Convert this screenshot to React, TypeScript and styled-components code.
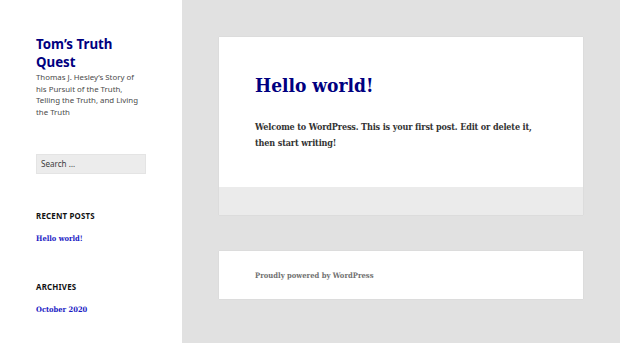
import React from "react";
import styled, { createGlobalStyle } from "styled-components";

const GlobalStyle = createGlobalStyle`
  html, body {
    margin: 0;
    padding: 0;
    background: #e1e1e1;
  }
`;

const serif = `"DejaVu Serif Condensed", "DejaVu Serif", "Liberation Serif", serif`;

const Page = styled.div`
  display: grid;
  grid-template-columns: 182px 1fr;
  min-height: 343px;
`;

const Sidebar = styled.aside`
  background: #ffffff;
  padding: 36px 0 0 36px;
  font-family: "Noto Sans", "Open Sans", sans-serif;
`;

const SiteTitle = styled.h1`
  margin: 0;
  width: 110px;
  font-size: 13.3px;
  line-height: 17.5px;
  font-weight: 700;
  color: #000080;
`;

const SiteDescription = styled.p`
  margin: 1px 0 0;
  width: 110px;
  font-size: 7.85px;
  line-height: 11.7px;
  color: #4a4a4a;
`;

const SearchField = styled.input`
  display: block;
  box-sizing: border-box;
  margin-top: 35px;
  width: 110px;
  height: 20px;
  padding: 0 4px;
  border: 1px solid #e4e4e4;
  background: #ececec;
  font-family: "Noto Sans", sans-serif;
  font-size: 8.1px;
  color: #555555;
  outline: none;

  &::placeholder {
    color: #3c3c3c;
  }
`;

const Widget = styled.section<{ $top: number }>`
  margin-top: ${(p) => p.$top}px;
`;

const WidgetTitle = styled.h2`
  margin: 0;
  font-size: 7.9px;
  line-height: 12px;
  font-weight: 700;
  letter-spacing: 0.2px;
  text-transform: uppercase;
  color: #111111;
`;

const WidgetLink = styled.a`
  display: block;
  margin-top: 11px;
  font-family: ${serif};
  font-stretch: condensed;
  font-size: 7.5px;
  line-height: 12px;
  font-weight: 700;
  color: #1a1ac4;
  text-decoration: none;
`;

const Main = styled.main`
  padding: 37px 37px 0;
  display: flex;
  flex-direction: column;
  gap: 36px;
  font-family: ${serif};
  font-stretch: condensed;
`;

const Card = styled.article`
  background: #ffffff;
  box-shadow: 0 0 1px rgba(0, 0, 0, 0.12);
`;

const CardBody = styled.div`
  padding: 34px 36px 30px;
  height: 150px;
  box-sizing: border-box;
`;

const PostTitle = styled.h2`
  margin: 0;
  font-size: 19px;
  line-height: 28px;
  font-weight: 700;
  color: #000080;
`;

const PostText = styled.p`
  margin: 20px 0 0;
  font-size: 9px;
  line-height: 16px;
  font-weight: 700;
  letter-spacing: -0.15px;
  color: #333333;
`;

const CardFooter = styled.div`
  height: 28px;
  background: #ebebeb;
`;

const SiteFooter = styled.footer`
  background: #ffffff;
  height: 48px;
  padding: 0 36px;
  display: flex;
  align-items: center;
  box-shadow: 0 0 1px rgba(0, 0, 0, 0.12);
`;

const Credit = styled.span`
  font-size: 7.6px;
  font-weight: 700;
  color: #707070;
`;

export default function App() {
  return (
    <>
      <GlobalStyle />
      <Page>
        <Sidebar>
          <SiteTitle>Tom’s Truth Quest</SiteTitle>
          <SiteDescription>
            Thomas J. Hesley’s Story of his Pursuit of the Truth, Telling the
            Truth, and Living the Truth
          </SiteDescription>
          <SearchField placeholder="Search …" />
          <Widget $top={36}>
            <WidgetTitle>Recent Posts</WidgetTitle>
            <WidgetLink href="#">Hello world!</WidgetLink>
          </Widget>
          <Widget $top={36}>
            <WidgetTitle>Archives</WidgetTitle>
            <WidgetLink href="#">October 2020</WidgetLink>
          </Widget>
        </Sidebar>
        <Main>
          <Card>
            <CardBody>
              <PostTitle>Hello world!</PostTitle>
              <PostText>
                Welcome to WordPress. This is your first post. Edit or delete
                it, then start writing!
              </PostText>
            </CardBody>
            <CardFooter />
          </Card>
          <SiteFooter>
            <Credit>Proudly powered by WordPress</Credit>
          </SiteFooter>
        </Main>
      </Page>
    </>
  );
}
